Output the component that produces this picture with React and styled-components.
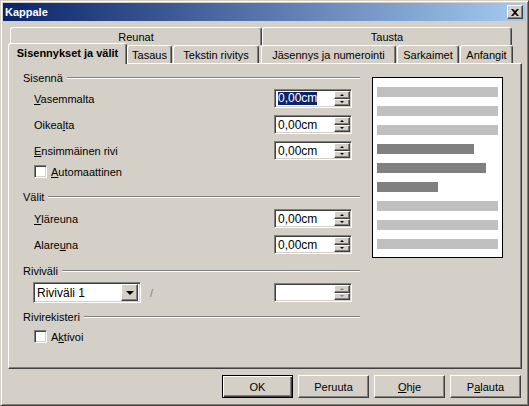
import styled, { createGlobalStyle } from 'styled-components';

const Global = createGlobalStyle`
  html, body { margin: 0; padding: 0; background: #D4D0C8; }
  body {
    font-family: "Liberation Sans", Arial, sans-serif;
    font-size: 11px;
    color: #000;
  }
`

const Window = styled.div`
  width: 529px;
  height: 406px;
  box-sizing: border-box;
  background: #D4D0C8;
  border: 1px solid;
  border-color: #D4D0C8 #404040 #404040 #D4D0C8;
  box-shadow: inset 1px 1px #fff, inset -1px -1px #808080;
  padding: 2px;
  display: flex;
  flex-direction: column;
`

const TitleBar = styled.div`
  height: 18px;
  display: flex;
  align-items: center;
  justify-content: space-between;
  padding: 0 3px 0 2px;
  background: linear-gradient(to right, #0A246A, #A6CAF0);
  color: #fff;
  font-weight: bold;
  font-size: 11px;
`

const CloseButton = styled.div`
  width: 16px;
  height: 14px;
  box-sizing: border-box;
  background: #D4D0C8;
  border: 1px solid;
  border-color: #fff #404040 #404040 #fff;
  box-shadow: inset -1px -1px #808080;
  display: flex;
  align-items: center;
  justify-content: center;
`

const Body = styled.div`
  flex: 1;
  display: flex;
  flex-direction: column;
  padding: 6px 4px 0 5px;
`

const TabRow = styled.div`
  display: flex;
  height: 18px;
  padding-left: ${p => p.$indent || 0}px;
`

const Tab = styled.div`
  box-sizing: border-box;
  width: ${p => p.$w}px;
  margin-left: ${p => p.$ml || 0}px;
  height: ${p => (p.$active ? 21 : 18)}px;
  margin-top: ${p => (p.$active ? -2 : 0)}px;
  position: relative;
  z-index: ${p => (p.$active ? 2 : 1)};
  background: #D4D0C8;
  border-top: 1px solid #fff;
  border-left: 1px solid #fff;
  border-right: 1px solid #404040;
  box-shadow: inset -1px 0 #808080;
  border-radius: 3px 3px 0 0;
  display: flex;
  align-items: center;
  justify-content: center;
  padding-bottom: ${p => (p.$active ? 2 : 0)}px;
  font-weight: ${p => (p.$active ? 'bold' : 'normal')};
  white-space: nowrap;
`

const Panel = styled.div`
  height: 306px;
  box-sizing: border-box;
  border: 1px solid;
  border-color: #fff #404040 #404040 #fff;
  box-shadow: inset -1px -1px #808080;
  display: flex;
  gap: 12px;
  padding: 7px 0 0 14px;
`

const LeftColumn = styled.div`
  width: 337px;
  display: flex;
  flex-direction: column;
`

const Header = styled.div`
  height: 14px;
  margin-top: ${p => p.$mt || 0}px;
  display: flex;
  align-items: center;
  gap: 4px;
  &::after {
    content: '';
    flex: 1;
    height: 0;
    border-top: 1px solid #808080;
    border-bottom: 1px solid #fff;
  }
`

const FieldRow = styled.div`
  height: ${p => p.$h || 19}px;
  margin-top: ${p => p.$mt || 0}px;
  display: flex;
  align-items: center;
  padding-left: 11px;
  padding-right: 8px;
`

const Label = styled.span`
  flex: 1;
`

const Sunken = styled.div`
  box-sizing: border-box;
  border: 1px solid;
  border-color: #808080 #fff #fff #808080;
  box-shadow: inset 1px 1px #404040, inset -1px -1px #D4D0C8;
  background: #fff;
`

const SpinField = styled(Sunken)`
  width: 78px;
  height: 19px;
  display: flex;
  padding: 1px 1px 1px 2px;
`

const Value = styled.div`
  flex: 1;
  display: flex;
  align-items: center;
  font-size: 12px;
  padding-left: 1px;
`

const Selected = styled.span`
  background: #0A246A;
  color: #fff;
  line-height: 13px;
`

const SpinButtons = styled.div`
  width: 16px;
  display: flex;
  flex-direction: column;
`

const Raised = styled.div`
  box-sizing: border-box;
  background: #D4D0C8;
  border: 1px solid;
  border-color: #fff #404040 #404040 #fff;
  box-shadow: inset -1px -1px #808080;
  display: flex;
  align-items: center;
  justify-content: center;
`

const SpinButton = styled(Raised)`
  flex: 1;
  padding-right: 1px;
`

const Arrow = styled.div`
  width: 0;
  height: 0;
  border-left: ${p => p.$half}px solid transparent;
  border-right: ${p => p.$half}px solid transparent;
  ${p => (p.$down ? 'border-top' : 'border-bottom')}: ${p => p.$tall}px solid ${p => (p.$disabled ? '#808080' : '#000')};
`

const CheckRow = styled.label`
  height: 13px;
  margin-top: ${p => p.$mt || 0}px;
  padding-left: 11px;
  display: flex;
  align-items: center;
  gap: 4px;
`

const CheckBox = styled(Sunken)`
  width: 13px;
  height: 13px;
`

const Dropdown = styled(Sunken)`
  width: 108px;
  height: 21px;
  display: flex;
  align-items: center;
  padding: 2px;
  margin-left: -1px;
`

const DropValue = styled.div`
  flex: 1;
  padding-left: 1px;
  font-size: 12px;
`

const DropButton = styled(Raised)`
  width: 17px;
  height: 17px;
`

const Slash = styled.span`
  flex: 1;
  padding-left: 9px;
  color: #808080;
`

const Preview = styled.div`
  width: 131px;
  height: 181px;
  margin-top: 6px;
  box-sizing: border-box;
  border: 1px solid #000;
  background: #fff;
  padding: 9px 4px 0 4px;
  display: flex;
  flex-direction: column;
  gap: 9px;
`

const Bar = styled.div`
  height: 10px;
  background: ${p => (p.$dark ? '#808080' : '#C0C0C0')};
`

const Footer = styled.div`
  display: flex;
  justify-content: flex-end;
  gap: 5px;
  padding: 6px 1px 0 0;
`

const Button = styled(Raised)`
  width: 71px;
  height: 23px;
  ${p => p.$default && `
    border-color: #000;
    box-shadow: inset 1px 1px #fff, inset -1px -1px #404040, inset -2px -2px #808080;
  `}
`

function Spin({ value, selected, disabled }) {
  return (
    <SpinField>
      <Value>{selected ? <Selected>{value}</Selected> : value}</Value>
      <SpinButtons>
        <SpinButton><Arrow $half={2} $tall={2} $disabled={disabled} /></SpinButton>
        <SpinButton><Arrow $half={2} $tall={2} $down $disabled={disabled} /></SpinButton>
      </SpinButtons>
    </SpinField>
  )
}

const bars = [
  { w: 100 }, { w: 100 }, { w: 100 },
  { w: 80, dark: true }, { w: 90, dark: true }, { w: 50, dark: true },
  { w: 100 }, { w: 100 }, { w: 100 },
]

export default function App() {
  return (
    <>
      <Global />
      <Window>
        <TitleBar>
          <span>Kappale</span>
          <CloseButton>
            <svg width="8" height="7" viewBox="0 0 8 7">
              <path d="M0 0h2l2 2 2-2h2L5 3.5 8 7H6L4 5 2 7H0l3-3.5z" fill="#000" />
            </svg>
          </CloseButton>
        </TitleBar>
        <Body>
          <TabRow $indent={2}>
            <Tab $w={252}>Reunat</Tab>
            <Tab $w={250}>Tausta</Tab>
          </TabRow>
          <TabRow>
            <Tab $w={119} $active>Sisennykset ja välit</Tab>
            <Tab $w={45}>Tasaus</Tab>
            <Tab $w={86} $ml={1}>Tekstin rivitys</Tab>
            <Tab $w={135} $ml={2}>Jäsennys ja numerointi</Tab>
            <Tab $w={62} $ml={1}>Sarkaimet</Tab>
            <Tab $w={53} $ml={1}>Anfangit</Tab>
          </TabRow>
          <Panel>
            <LeftColumn>
              <Header>Sisennä</Header>
              <FieldRow $mt={4}>
                <Label><u>V</u>asemmalta</Label>
                <Spin value="0,00cm" selected />
              </FieldRow>
              <FieldRow $mt={7}>
                <Label>Oikea<u>l</u>ta</Label>
                <Spin value="0,00cm" />
              </FieldRow>
              <FieldRow $mt={7}>
                <Label><u>E</u>nsimmäinen rivi</Label>
                <Spin value="0,00cm" />
              </FieldRow>
              <CheckRow $mt={5}>
                <CheckBox />
                <span><u>A</u>utomaattinen</span>
              </CheckRow>

              <Header $mt={12}>Välit</Header>
              <FieldRow $mt={5}>
                <Label><u>Y</u>läreuna</Label>
                <Spin value="0,00cm" />
              </FieldRow>
              <FieldRow $mt={7}>
                <Label>Alare<u>u</u>na</Label>
                <Spin value="0,00cm" />
              </FieldRow>

              <Header $mt={10}>Riviväli</Header>
              <FieldRow $mt={4} $h={21}>
                <Dropdown>
                  <DropValue>Riviväli 1</DropValue>
                  <DropButton><Arrow $half={4} $tall={4} $down /></DropButton>
                </Dropdown>
                <Slash>/</Slash>
                <Spin value="" disabled />
              </FieldRow>

              <Header $mt={7}>Rivirekisteri</Header>
              <CheckRow $mt={6}>
                <CheckBox />
                <span>A<u>k</u>tivoi</span>
              </CheckRow>
            </LeftColumn>
            <Preview>
              {bars.map((b, i) => (
                <Bar key={i} $dark={b.dark} style={{ width: b.w + '%' }} />
              ))}
            </Preview>
          </Panel>
          <Footer>
            <Button $default>OK</Button>
            <Button>Peruuta</Button>
            <Button><span><u>O</u>hje</span></Button>
            <Button><span>P<u>a</u>lauta</span></Button>
          </Footer>
        </Body>
      </Window>
    </>
  )
}
